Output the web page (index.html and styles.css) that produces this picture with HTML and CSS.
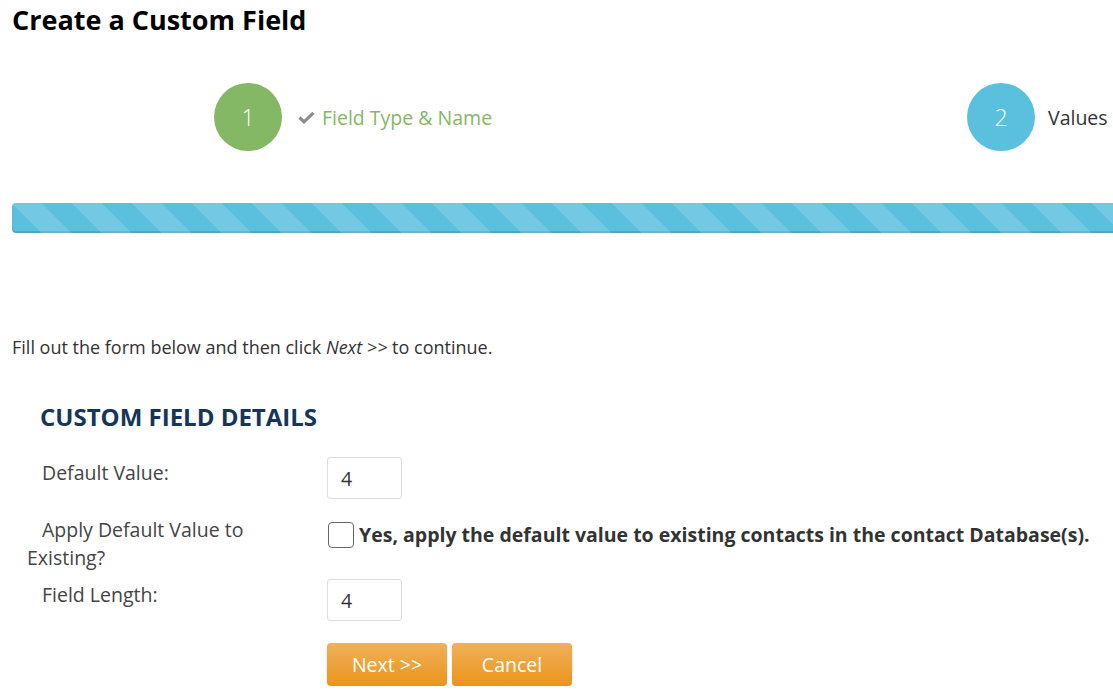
FILE: index.html
```html
<!DOCTYPE html>
<html>
<head>
<meta charset="utf-8">
<link rel="stylesheet" href="styles.css">
</head>
<body>
<div class="page">
  <h1 class="title">Create a Custom Field</h1>
  <div class="steps">
    <div class="step done">
      <div class="circle">1</div>
      <svg class="check" width="17" height="13" viewBox="0 0 17 13"><path d="M1.5 6.5 L6 10.8 L15.5 1.8" fill="none" stroke="#8c8c8c" stroke-width="3.2" stroke-linejoin="miter"/></svg>
      <span class="step-label">Field Type &amp; Name</span>
    </div>
    <div class="step current">
      <div class="circle">2</div>
      <span class="step-label">Values</span>
    </div>
  </div>
  <div class="progress"><div class="bar"></div></div>
  <p class="intro">Fill out the form below and then click <em>Next &gt;&gt;</em> to continue.</p>
  <h2 class="section">CUSTOM FIELD DETAILS</h2>
  <div class="form">
    <div class="row gap-16">
      <div class="label">Default Value:</div>
      <div class="field"><input class="text" type="text" value="4"></div>
    </div>
    <div class="row gap-7">
      <div class="label">Apply Default Value to Existing?</div>
      <div class="field check-field"><span class="box"></span><span class="check-text">Yes, apply the default value to existing contacts in the contact Database(s).</span></div>
    </div>
    <div class="row gap-22">
      <div class="label">Field Length:</div>
      <div class="field"><input class="text" type="text" value="4"></div>
    </div>
    <div class="row">
      <div class="label"></div>
      <div class="field buttons"><button class="btn">Next &gt;&gt;</button><button class="btn">Cancel</button></div>
    </div>
  </div>
</div>
</body>
</html>
```

FILE: styles.css
```css
html, body {
  margin: 0;
  padding: 0;
  background: #fff;
}
body {
  font-family: "Open Sans", "Liberation Sans", sans-serif;
  color: #333;
  overflow: hidden;
}
.page {
  padding-left: 12px;
  width: 1300px;
}
.title {
  margin: 0;
  padding-top: 4px;
  font-size: 27px;
  font-weight: 700;
  line-height: 32px;
  color: #000;
}
.steps {
  display: grid;
  grid-template-columns: 753px auto;
  padding-left: 202px;
  margin-top: 47px;
}
.step {
  display: flex;
  align-items: center;
}
.circle {
  width: 68px;
  height: 68px;
  border-radius: 50%;
  color: #fff;
  font-size: 23px;
  font-weight: 300;
  display: flex;
  align-items: center;
  justify-content: center;
}
.done .circle { background: #84b865; }
.current .circle { background: #5bc0de; }
.check { margin-left: 16px; margin-right: 7px; }
.step-label { font-size: 19.5px; }
.done .step-label { color: #84b865; }
.current .step-label { color: #333; margin-left: 13px; }
.progress {
  margin-top: 52px;
  height: 30px;
  border-radius: 4px 0 0 4px;
  overflow: hidden;
  background: #5bc0de;
  box-shadow: inset 0 -2px 0 rgba(0,0,0,0.12);
}
.bar {
  height: 100%;
  background-image: linear-gradient(45deg, rgba(255,255,255,.15) 25%, transparent 25%, transparent 50%, rgba(255,255,255,.15) 50%, rgba(255,255,255,.15) 75%, transparent 75%, transparent);
  background-size: 60px 60px;
}
.intro {
  margin: 102px 0 0;
  font-size: 18px;
  line-height: 24px;
}
.section {
  margin: 42px 0 0 28px;
  font-size: 24px;
  font-weight: 700;
  color: #14365a;
  line-height: 32px;
}
.form {
  margin-top: 24px;
  margin-left: 15px;
}
.row {
  display: flex;
  align-items: flex-start;
}
.gap-16 { margin-bottom: 16px; }
.gap-7 { margin-bottom: 7px; }
.gap-22 { margin-bottom: 22px; }
.label {
  width: 280px;
  margin-right: 20px;
  text-indent: 15px;
  font-size: 19.5px;
  line-height: 28px;
  color: #444;
  padding-top: 2px;
}
.gap-7 .label { padding-top: 1px; }
.field { flex: 1; }
.text {
  display: block;
  box-sizing: border-box;
  width: 75px;
  height: 42px;
  margin: 0;
  border: 1px solid #ddd;
  border-radius: 3px;
  padding: 0 13px;
  font-family: inherit;
  font-size: 19.5px;
  color: #333;
}
.check-field {
  display: flex;
  align-items: center;
  padding-top: 6px;
}
.box {
  flex: none;
  box-sizing: border-box;
  width: 26px;
  height: 26px;
  border: 1.5px solid #666;
  border-radius: 4px;
  margin: 0 5px 0 1px;
}
.check-text {
  font-size: 19.5px;
  font-weight: 700;
  color: #333;
  white-space: nowrap;
}
.buttons {
  display: flex;
  gap: 5px;
}
.btn {
  width: 120px;
  height: 43px;
  border: 0;
  border-radius: 4px;
  background: linear-gradient(#f1b05a, #ea941c);
  color: #fff;
  font-family: inherit;
  font-size: 19.5px;
  box-shadow: 0 1px 2px rgba(0,0,0,0.15);
}
```
